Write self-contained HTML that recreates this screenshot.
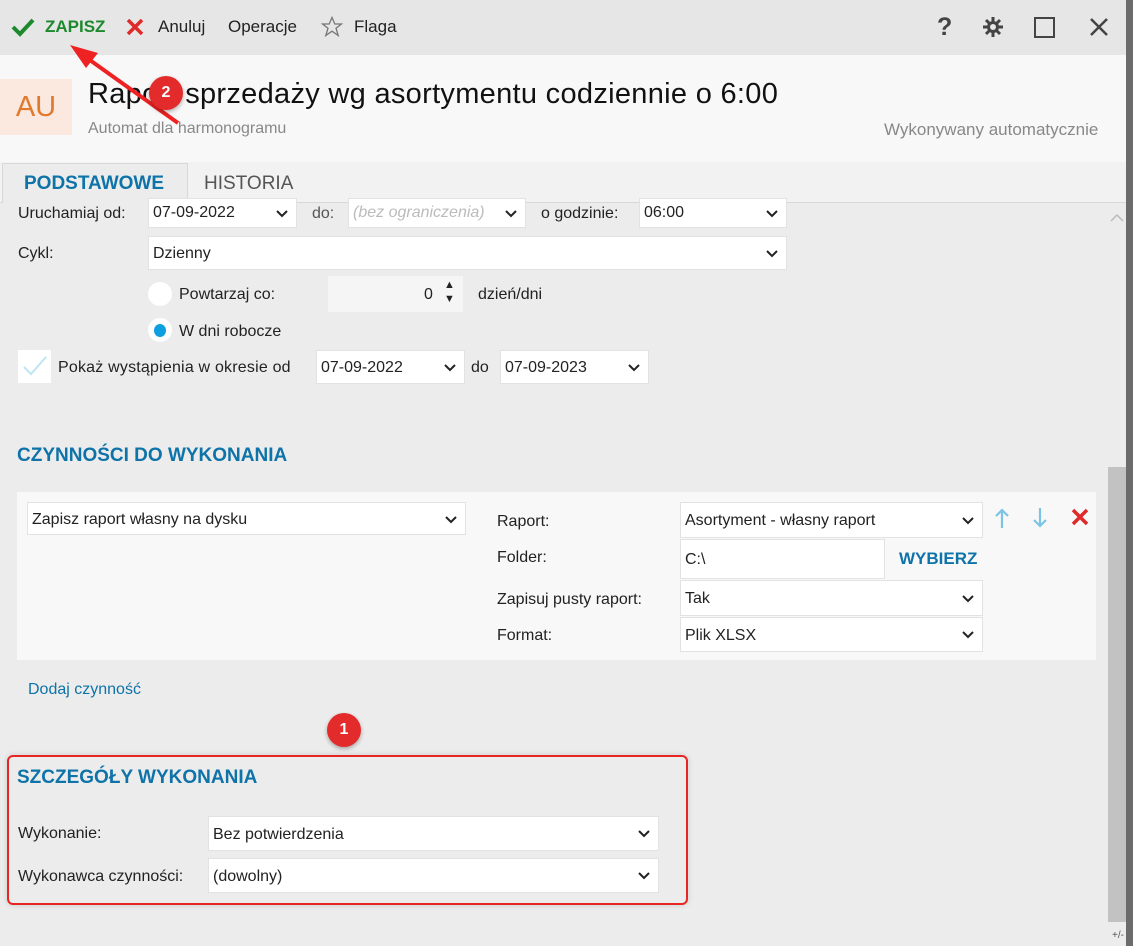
<!DOCTYPE html>
<html><head><meta charset="utf-8"><style>
*{margin:0;padding:0;box-sizing:border-box}
body{width:1133px;height:946px;overflow:hidden;background:#ececec;font-family:"Liberation Sans",sans-serif;color:#222;position:relative;font-size:16px}
.a{position:absolute;white-space:nowrap}
.box{position:absolute;background:#fff;border:1px solid #e2e2e2;font-size:16px;padding-left:4px;line-height:30px}
.chev{position:absolute;right:8px;top:0;font-size:12px}
.chev svg{position:absolute;right:0;top:11px}
.h{color:#0e73a8;font-weight:bold;font-size:19px}
</style></head><body>
<div class="a" style="left:0;top:0;width:1126px;height:55px;background:#e6e6e6"></div>
<div class="a" style="left:1126px;top:0;width:7px;height:946px;background:#6b6b6b"></div>
<!-- toolbar -->
<svg class="a" style="left:11px;top:17px" width="24" height="20" viewBox="0 0 24 20"><path d="M2 10 L9 17 L22 3" stroke="#1c8a2c" stroke-width="4" fill="none"/></svg>
<div class="a" style="left:45px;top:17px;font-size:17px;font-weight:bold;color:#1c8a2c">ZAPISZ</div>
<svg class="a" style="left:126px;top:18px" width="18" height="18"><path d="M2 2L16 16M16 2L2 16" stroke="#e02a2a" stroke-width="3.5"/></svg>
<div class="a" style="left:158px;top:17px;font-size:17px">Anuluj</div>
<div class="a" style="left:228px;top:17px;font-size:17px">Operacje</div>
<svg class="a" style="left:321px;top:16px" width="22" height="22" viewBox="0 0 22 22"><path d="M11 1.5L13.8 8H20.5L15 12.2L17.2 19.5L11 15.2L4.8 19.5L7 12.2L1.5 8H8.2Z" fill="none" stroke="#777" stroke-width="1.3"/></svg>
<div class="a" style="left:354px;top:17px;font-size:17px">Flaga</div>
<div class="a" style="left:937px;top:13px;font-size:25px;font-weight:bold;color:#444">?</div>
<svg class="a" style="left:982px;top:16px" width="22" height="22" viewBox="0 0 22 22"><g stroke="#444" stroke-width="3"><path d="M11 1v20M1 11h20M4 4l14 14M18 4L4 18"/></g><circle cx="11" cy="11" r="6" fill="#444"/><circle cx="11" cy="11" r="3" fill="#e6e6e6"/></svg>
<div class="a" style="left:1034px;top:17px;width:21px;height:21px;border:2.5px solid #444"></div>
<svg class="a" style="left:1089px;top:17px" width="20" height="20"><path d="M2 2L18 18M18 2L2 18" stroke="#444" stroke-width="2.5"/></svg>
<!-- header -->
<div class="a" style="left:0;top:55px;width:1126px;height:107px;background:#f8f8f8"></div>
<div class="a" style="left:0;top:79px;width:72px;height:56px;background:#fbe9df;color:#e07a2e;font-size:29px;line-height:56px;text-align:center">AU</div>
<div class="a" style="left:88px;top:78px;font-size:29px;letter-spacing:0.3px;color:#111">Raport sprzedaży wg asortymentu codziennie o 6:00</div>
<div class="a" style="left:88px;top:120px;font-size:16px;color:#888">Automat dla harmonogramu</div>
<div class="a" style="left:884px;top:120px;font-size:17px;color:#888">Wykonywany automatycznie</div>
<!-- tabs -->
<div class="a" style="left:0;top:162px;width:1126px;height:41px;background:#f2f2f2;border-bottom:1px solid #d8d8d8"></div>
<div class="a" style="left:2px;top:163px;width:186px;height:40px;background:#ececec;border:1px solid #d8d8d8;border-bottom:none"></div>
<div class="a" style="left:24px;top:173px;font-size:19px;font-weight:bold;color:#0e73a8">PODSTAWOWE</div>
<div class="a" style="left:204px;top:173px;font-size:19px;color:#555">HISTORIA</div>
<!-- scrollbar -->
<div class="a" style="left:1108px;top:467px;width:18px;height:455px;background:#c2c2c2"></div>
<svg class="a" style="left:1110px;top:213px" width="14" height="10"><path d="M1 8L7 2L13 8" stroke="#bbb" stroke-width="1.5" fill="none"/></svg>
<div class="a" style="left:1112px;top:930px;font-size:10px;color:#555">+/-</div>
<!-- form -->
<div class="a" style="left:18px;top:205px;font-size:16px">Uruchamiaj od:</div>
<div class="box" style="left:148px;top:198px;width:149px;height:30px;line-height:28px">07-09-2022<span class="chev"><svg width="12" height="8"><path d="M1 1L6 6L11 1" stroke="#222" stroke-width="2" fill="none"/></svg></span></div>
<div class="a" style="left:312px;top:205px;color:#555">do:</div>
<div class="box" style="left:348px;top:198px;width:178px;height:30px;line-height:28px;color:#bbb;font-style:italic">(bez ograniczenia)<span class="chev"><svg width="12" height="8"><path d="M1 1L6 6L11 1" stroke="#222" stroke-width="2" fill="none"/></svg></span></div>
<div class="a" style="left:541px;top:205px">o godzinie:</div>
<div class="box" style="left:639px;top:198px;width:148px;height:30px;line-height:28px">06:00<span class="chev"><svg width="12" height="8"><path d="M1 1L6 6L11 1" stroke="#222" stroke-width="2" fill="none"/></svg></span></div>
<div class="a" style="left:18px;top:245px">Cykl:</div>
<div class="box" style="left:148px;top:236px;width:639px;height:34px;line-height:34px">Dzienny<span class="chev"><svg width="12" height="8" style="top:13px"><path d="M1 1L6 6L11 1" stroke="#222" stroke-width="2" fill="none"/></svg></span></div>
<div class="a" style="left:148px;top:282px;width:24px;height:24px;border-radius:50%;background:#fff"></div>
<div class="a" style="left:179px;top:286px">Powtarzaj co:</div>
<div class="a" style="left:328px;top:276px;width:135px;height:36px;background:#f5f5f5"></div>
<div class="a" style="left:424px;top:286px">0</div>
<div class="a" style="left:444px;top:278px;font-size:11px;line-height:14px">▲<br>▼</div>
<div class="a" style="left:478px;top:286px">dzień/dni</div>
<div class="a" style="left:148px;top:318px;width:24px;height:24px;border-radius:50%;background:#fff"></div>
<div class="a" style="left:154px;top:324px;width:12px;height:13px;border-radius:50%;background:#0ea0de"></div>
<div class="a" style="left:179px;top:323px">W dni robocze</div>
<div class="a" style="left:18px;top:350px;width:33px;height:33px;background:#fff"></div>
<svg class="a" style="left:22px;top:355px" width="26" height="22"><path d="M2 12L9 19L24 2" stroke="#bfe4f2" stroke-width="2" fill="none"/></svg>
<div class="a" style="left:58px;top:359px;letter-spacing:0.2px">Pokaż wystąpienia w okresie od</div>
<div class="box" style="left:316px;top:350px;width:149px;height:34px;line-height:34px">07-09-2022<span class="chev"><svg width="12" height="8" style="top:13px"><path d="M1 1L6 6L11 1" stroke="#222" stroke-width="2" fill="none"/></svg></span></div>
<div class="a" style="left:471px;top:359px">do</div>
<div class="box" style="left:500px;top:350px;width:149px;height:34px;line-height:34px">07-09-2023<span class="chev"><svg width="12" height="8" style="top:13px"><path d="M1 1L6 6L11 1" stroke="#222" stroke-width="2" fill="none"/></svg></span></div>
<div class="a h" style="left:17px;top:445px">CZYNNOŚCI DO WYKONANIA</div>
<div class="a" style="left:17px;top:492px;width:1079px;height:168px;background:#f8f8f8"></div>
<div class="box" style="left:27px;top:502px;width:439px;height:33px;line-height:33px">Zapisz raport własny na dysku<span class="chev"><svg width="12" height="8" style="top:13px"><path d="M1 1L6 6L11 1" stroke="#222" stroke-width="2" fill="none"/></svg></span></div>
<div class="a" style="left:497px;top:513px">Raport:</div>
<div class="box" style="left:680px;top:502px;width:303px;height:36px;line-height:36px">Asortyment - własny raport<span class="chev"><svg width="12" height="8" style="top:14px"><path d="M1 1L6 6L11 1" stroke="#222" stroke-width="2" fill="none"/></svg></span></div>
<svg class="a" style="left:993px;top:507px" width="18" height="22"><path d="M9 21V3M3 9L9 3L15 9" stroke="#7cc4e6" stroke-width="2.2" fill="none"/></svg>
<svg class="a" style="left:1031px;top:507px" width="18" height="22"><path d="M9 1V19M3 13L9 19L15 13" stroke="#7cc4e6" stroke-width="2.2" fill="none"/></svg>
<svg class="a" style="left:1071px;top:508px" width="18" height="18"><path d="M2 2L16 16M16 2L2 16" stroke="#e02a2a" stroke-width="3.5"/></svg>
<div class="a" style="left:497px;top:549px">Folder:</div>
<div class="box" style="left:680px;top:539px;width:205px;height:40px;line-height:40px">C:\</div>
<div class="a" style="left:899px;top:549px;font-weight:bold;color:#0e73a8;font-size:17px">WYBIERZ</div>
<div class="a" style="left:497px;top:591px">Zapisuj pusty raport:</div>
<div class="box" style="left:680px;top:580px;width:303px;height:36px;line-height:36px">Tak<span class="chev"><svg width="12" height="8" style="top:14px"><path d="M1 1L6 6L11 1" stroke="#222" stroke-width="2" fill="none"/></svg></span></div>
<div class="a" style="left:497px;top:627px">Format:</div>
<div class="box" style="left:680px;top:617px;width:303px;height:35px;line-height:35px">Plik XLSX<span class="chev"><svg width="12" height="8" style="top:13px"><path d="M1 1L6 6L11 1" stroke="#222" stroke-width="2" fill="none"/></svg></span></div>
<div class="a" style="left:28px;top:681px;color:#0e73a8">Dodaj czynność</div>
<!-- red frame -->
<div class="a" style="left:7px;top:755px;width:681px;height:150px;border:2px solid #e82424;border-radius:6px;box-shadow:0 0 6px rgba(0,0,0,.15)"></div>
<div class="a h" style="left:17px;top:767px">SZCZEGÓŁY WYKONANIA</div>
<div class="a" style="left:18px;top:825px">Wykonanie:</div>
<div class="box" style="left:208px;top:816px;width:451px;height:35px;line-height:35px">Bez potwierdzenia<span class="chev"><svg width="12" height="8" style="top:13px"><path d="M1 1L6 6L11 1" stroke="#222" stroke-width="2" fill="none"/></svg></span></div>
<div class="a" style="left:18px;top:868px">Wykonawca czynności:</div>
<div class="box" style="left:208px;top:858px;width:451px;height:35px;line-height:35px">(dowolny)<span class="chev"><svg width="12" height="8" style="top:13px"><path d="M1 1L6 6L11 1" stroke="#222" stroke-width="2" fill="none"/></svg></span></div>
<!-- badges & arrow -->
<div class="a" style="left:327px;top:713px;width:34px;height:34px;border-radius:50%;background:#e32b2b;color:#fff;font-weight:bold;text-align:center;line-height:34px;font-size:16px;box-shadow:0 2px 4px rgba(0,0,0,.3)">1</div>
<svg class="a" style="left:60px;top:35px" width="130" height="100"><path d="M118 88L20 18" stroke="#ee2222" stroke-width="4"/><path d="M10 10L38 18L26 33Z" fill="#ee2222"/></svg>
<div class="a" style="left:149px;top:76px;width:34px;height:34px;border-radius:50%;background:#e32b2b;color:#fff;font-weight:bold;text-align:center;line-height:34px;font-size:16px;box-shadow:0 2px 4px rgba(0,0,0,.3)">2</div>
</body></html>
